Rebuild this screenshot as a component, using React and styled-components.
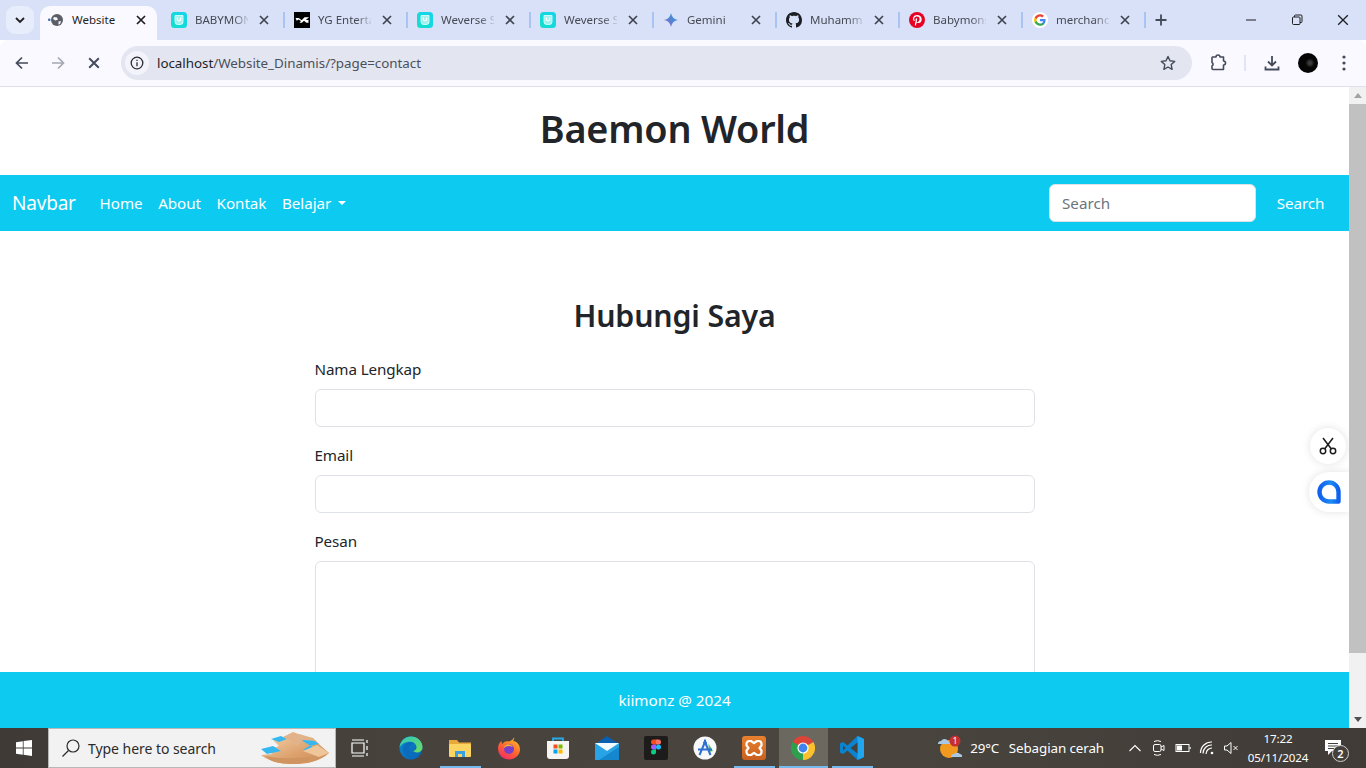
import React from 'react';
import styled, { createGlobalStyle } from 'styled-components';

const FONT = '"Noto Sans", "Open Sans", Arial, sans-serif';
const CYAN = '#0dcaf0';

const GlobalStyle = createGlobalStyle`
  html, body {
    margin: 0;
    padding: 0;
    overflow: hidden;
    background: #fff;
  }
  * { box-sizing: border-box; }
`;

const Screen = styled.div`
  width: 1366px;
  height: 768px;
  display: flex;
  flex-direction: column;
  overflow: hidden;
  font-family: ${FONT};
  color: #212529;
`;

/* browser tabs */
const TabStrip = styled.div`
  height: 40px;
  flex: none;
  display: flex;
  align-items: flex-start;
  padding: 6px 0 0 6px;
  background: #d8e1f8;
`;

const TabMenu = styled.div`
  width: 28px;
  height: 28px;
  margin-right: 6px;
  display: flex;
  align-items: center;
  justify-content: center;
  border-radius: 9px;
  background: #e7edfb;
`;

const Tab = styled.div`
  width: ${(p) => (p.$active ? '117px' : '120px')};
  height: 34px;
  margin-right: ${(p) => (p.$active ? '6px' : '0')};
  padding: 0 0 6px 8px;
  display: flex;
  align-items: center;
  border-radius: 10px 10px 0 0;
  background: ${(p) => (p.$active ? '#f9f9ff' : 'transparent')};
  color: ${(p) => (p.$active ? '#1f1f1f' : '#474a53')};
`;

const TabIcon = styled.span`
  width: 16px;
  height: 16px;
  flex: none;
  display: flex;
`;

const TabTitle = styled.span`
  width: 53px;
  margin-left: 8px;
  flex: none;
  white-space: nowrap;
  font-size: 11.5px;
  line-height: 16px;
  ${(p) => !p.$active && `
    -webkit-mask-image: linear-gradient(90deg, #000 72%, rgba(0, 0, 0, 0.15) 100%);
    mask-image: linear-gradient(90deg, #000 72%, rgba(0, 0, 0, 0.15) 100%);
  `}
`;

const TabClose = styled.span`
  width: 16px;
  height: 16px;
  margin-left: 8px;
  flex: none;
  display: flex;
  align-items: center;
  justify-content: center;
`;

const TabDivider = styled.span`
  width: 2px;
  height: 16px;
  margin: 6px 1px 0 0;
  flex: none;
  background: #a9c4f2;
`;

const NewTab = styled.span`
  width: 16px;
  height: 16px;
  margin: 6px 0 0 6px;
  display: flex;
`;

const WindowControls = styled.div`
  margin: -6px 0 0 auto;
  display: flex;
`;

const WindowButton = styled.span`
  width: 46px;
  height: 40px;
  display: flex;
  align-items: center;
  justify-content: center;
`;

/* address bar */
const Toolbar = styled.div`
  height: 47px;
  flex: none;
  display: flex;
  align-items: center;
  padding: 0 4px 1px;
  background: #f9f9ff;
  border-bottom: 1px solid #dfe0ee;
  border-radius: 8px 8px 0 0;
`;

const ToolButton = styled.span`
  width: 36px;
  height: 36px;
  flex: none;
  display: flex;
  align-items: center;
  justify-content: center;
`;

const Omnibox = styled.div`
  flex: 1;
  height: 34px;
  margin: 0 8px 0 9px;
  padding: 0 6px 0 4px;
  display: flex;
  align-items: center;
  border-radius: 17px;
  background: #e3e6f1;
`;

const InfoChip = styled.span`
  width: 24px;
  height: 24px;
  margin-right: 8px;
  display: flex;
  align-items: center;
  justify-content: center;
  border-radius: 50%;
  background: #f3f4fb;
`;

const Url = styled.span`
  flex: 1;
  font-size: 13.4px;
  letter-spacing: -0.04px;
  color: #4b5059;
  b {
    font-weight: 400;
    color: #1f1f1f;
  }
`;

const ToolDivider = styled.span`
  width: 2px;
  height: 16px;
  margin: 0 8px;
  background: #dde5f8;
`;

const Avatar = styled.span`
  width: 20px;
  height: 20px;
  border-radius: 50%;
  background: radial-gradient(circle at 60% 50%, #3d3d3d 0 8%, #050505 30%);
`;

/* page inside the browser */
const Viewport = styled.div`
  flex: 1;
  min-height: 0;
  display: flex;
`;

const Page = styled.div`
  position: relative;
  flex: 1;
  overflow: hidden;
  background: #fff;
`;

const SiteTitle = styled.h1`
  margin: 0;
  padding: 18px 0 22px;
  text-align: center;
  font-size: 37.8px;
  line-height: 48px;
  font-weight: 600;
  letter-spacing: -0.2px;
`;

const Navbar = styled.nav`
  height: 56px;
  padding: 0 12px;
  display: flex;
  align-items: center;
  background: ${CYAN};
  color: #fff;
`;

const Brand = styled.a`
  margin-right: 16px;
  font-size: 19px;
  letter-spacing: -0.2px;
`;

const NavLink = styled.a`
  padding: 8px 7.8px;
  font-size: 15.2px;
  line-height: 24px;
  letter-spacing: -0.05px;
  display: flex;
  align-items: center;
`;

const Caret = styled.span`
  margin-left: 7px;
  border-top: 4.8px solid #fff;
  border-left: 4.8px solid transparent;
  border-right: 4.8px solid transparent;
`;

const SearchForm = styled.form`
  margin-left: auto;
  display: flex;
  gap: 8px;
`;

const SearchInput = styled.input`
  width: 207px;
  height: 38px;
  padding: 6px 12px;
  border: 1px solid #dee2e6;
  border-radius: 6px;
  font-family: ${FONT};
  font-size: 15.2px;
  color: #212529;
  &::placeholder {
    color: #6c757d;
    opacity: 1;
  }
`;

const SearchButton = styled.button`
  width: 73px;
  height: 38px;
  padding: 0;
  border: 0;
  background: transparent;
  color: #fff;
  font-family: ${FONT};
  font-size: 15.2px;
  letter-spacing: -0.12px;
`;

const Main = styled.main`
  width: 720px;
  margin: 0 auto;
  padding-top: 66px;
`;

const ContactTitle = styled.h2`
  margin: 0 0 22px;
  text-align: center;
  font-size: 30.3px;
  line-height: 38px;
  font-weight: 600;
  letter-spacing: -0.15px;
`;

const Field = styled.div`
  margin-bottom: 16px;
`;

const Label = styled.label`
  display: block;
  margin-bottom: 8px;
  font-size: 15.2px;
  line-height: 24px;
  letter-spacing: -0.1px;
`;

const TextField = styled.input`
  display: block;
  width: 100%;
  height: 38px;
  border: 1px solid #dee2e6;
  border-radius: 6px;
  background: #fff;
`;

const MessageField = styled.textarea`
  display: block;
  width: 100%;
  height: 200px;
  border: 1px solid #dee2e6;
  border-radius: 6px;
  background: #fff;
  resize: none;
`;

const Footer = styled.footer`
  position: absolute;
  left: 0;
  right: 0;
  bottom: 0;
  height: 56px;
  display: flex;
  align-items: center;
  justify-content: center;
  background: ${CYAN};
  color: #fff;
  font-size: 15.2px;
  letter-spacing: 0;
`;

const FloatButton = styled.div`
  position: absolute;
  top: ${(p) => p.$top}px;
  right: ${(p) => (p.$docked ? 0 : 3)}px;
  width: ${(p) => (p.$docked ? 40 : 36)}px;
  height: ${(p) => (p.$docked ? 40 : 36)}px;
  display: flex;
  align-items: center;
  justify-content: center;
  border-radius: ${(p) => (p.$docked ? '20px 0 0 20px' : '50%')};
  background: #fff;
  box-shadow: 0 0 8px rgba(0, 0, 0, 0.12);
`;

const Scrollbar = styled.div`
  width: 17px;
  flex: none;
  display: flex;
  flex-direction: column;
  background: #f1f1f1;
`;

const ScrollArrow = styled.span`
  height: 17px;
  flex: none;
  display: flex;
  align-items: center;
  justify-content: center;
  margin-top: ${(p) => (p.$down ? 'auto' : '0')};
`;

const ScrollThumb = styled.div`
  height: 549px;
  background: #c1c1c1;
`;

/* windows taskbar */
const Taskbar = styled.div`
  height: 40px;
  flex: none;
  display: flex;
  align-items: stretch;
  background: linear-gradient(90deg, #3f3a36 0%, #47433c 30%, #4a463f 60%, #403b37 100%);
  color: #fff;
`;

const StartButton = styled.span`
  width: 48px;
  display: flex;
  align-items: center;
  justify-content: center;
`;

const SearchBox = styled.div`
  width: 288px;
  margin-right: 1.5px;
  padding: 0 4px 0 12px;
  display: flex;
  align-items: center;
  background: #f2f2f2;
  border: 1px solid #b7b7b7;
  color: #2b2b2b;
  font-size: 14px;
  letter-spacing: -0.05px;
`;

const SearchHint = styled.span`
  margin-left: 7px;
  flex: 1;
`;

const TaskSlot = styled.span`
  position: relative;
  width: 49px;
  display: flex;
  align-items: center;
  justify-content: center;
  background: ${(p) => (p.$active ? '#6b6860' : 'transparent')};
  &::after {
    content: '';
    display: ${(p) => (p.$open ? 'block' : 'none')};
    position: absolute;
    bottom: 0;
    left: ${(p) => (p.$active ? 0 : '4px')};
    right: ${(p) => (p.$active ? 0 : '4px')};
    height: 2px;
    background: #76b9ed;
  }
`;

const Tray = styled.div`
  margin-left: auto;
  padding-right: 13px;
  display: flex;
  align-items: center;
`;

const Weather = styled.div`
  margin-right: 19px;
  display: flex;
  align-items: center;
  font-size: 13.4px;
  letter-spacing: -0.1px;
  span + span {
    margin-left: 9.5px;
  }
  svg {
    margin-right: 7px;
  }
`;

const TrayIcon = styled.span`
  width: 24px;
  display: flex;
  justify-content: center;
`;

const Clock = styled.div`
  width: 70px;
  text-align: center;
  font-size: 11.6px;
  line-height: 19px;
  letter-spacing: -0.1px;
`;

const Notification = styled.span`
  position: relative;
  width: 40px;
  display: flex;
  justify-content: center;
`;

const NotificationCount = styled.span`
  position: absolute;
  top: 5px;
  left: 19px;
  width: 17px;
  height: 17px;
  display: flex;
  align-items: center;
  justify-content: center;
  border-radius: 50%;
  border: 1.5px solid #cfcfcf;
  background: #45403b;
  font-size: 11px;
  font-weight: 600;
`;

/* icons */
const Line = ({ size = 16, color = '#444a5a', width = 1.8, view = 16, children, ...rest }) => (
  <svg width={size} height={size} viewBox={`0 0 ${view} ${view}`} fill="none" stroke={color} strokeWidth={width} {...rest}>
    {children}
  </svg>
);

const CloseIcon = ({ size = 10, color = '#3f4450', width = 1.7 }) => (
  <Line size={size} view={10} color={color} width={width}><path d="M1 1l8 8M9 1l-8 8" /></Line>
);

const WeverseIcon = () => (
  <svg width="16" height="16" viewBox="0 0 16 16">
    <defs>
      <linearGradient id="wv" x1="0" y1="1" x2="1" y2="0">
        <stop offset="0" stopColor="#13e0c8" />
        <stop offset="1" stopColor="#14d3f0" />
      </linearGradient>
    </defs>
    <rect width="16" height="16" rx="3.5" fill="url(#wv)" />
    <path d="M4 3.500h8V10a2.500 2.500 0 0 1-2.500 2.500h-3A2.500 2.500 0 0 1 4 10z" fill="#9ff2ee" stroke="#eafffd" strokeWidth="0.8" />
    <path d="M6.300 5.600v1.400a1.700 1.700 0 0 0 3.400 0V5.600" fill="none" stroke="#fff" strokeWidth="1.200" />
  </svg>
);

const YgIcon = () => (
  <svg width="16" height="16" viewBox="0 0 16 16">
    <rect width="16" height="16" fill="#000" />
    <path d="M1.500 6h3.200l3 2.200L10.500 5.200H15L11.800 8h2.700v2.800h-2.200L10 8.800 7.800 10.800H5.500L7 9 4.500 7.500 2.800 8.800z" fill="#fff" />
  </svg>
);

const GeminiIcon = () => (
  <svg width="16" height="16" viewBox="0 0 16 16">
    <defs>
      <linearGradient id="gm" x1="0" y1="1" x2="1" y2="0">
        <stop offset="0" stopColor="#9168c0" />
        <stop offset="0.5" stopColor="#5684d1" />
        <stop offset="1" stopColor="#1ba1e3" />
      </linearGradient>
    </defs>
    <path d="M8 1c.6 3.800 3 6.300 7 7-4 .7-6.400 3.200-7 7-.6-3.800-3-6.300-7-7 4-.7 6.400-3.200 7-7z" fill="url(#gm)" />
  </svg>
);

const GithubIcon = () => (
  <svg width="16" height="16" viewBox="0 0 16 16" fill="#1b1f23">
    <path d="M8 0C3.58 0 0 3.58 0 8c0 3.54 2.29 6.53 5.47 7.59.4.07.55-.17.55-.38 0-.19-.01-.82-.01-1.49-2.01.37-2.53-.49-2.69-.94-.09-.23-.48-.94-.82-1.13-.28-.15-.68-.52-.01-.53.63-.01 1.08.58 1.23.82.72 1.21 1.87.87 2.33.66.07-.52.28-.87.51-1.07-1.78-.2-3.64-.89-3.64-3.95 0-.87.31-1.59.82-2.15-.08-.2-.36-1.02.08-2.12 0 0 .67-.21 2.2.82.64-.18 1.32-.27 2-.27s1.36.09 2 .27c1.53-1.04 2.2-.82 2.2-.82.44 1.1.16 1.92.08 2.12.51.56.82 1.27.82 2.15 0 3.07-1.87 3.75-3.65 3.95.29.25.54.73.54 1.48 0 1.07-.01 1.93-.01 2.2 0 .21.15.46.55.38A8.01 8.01 0 0 0 16 8c0-4.42-3.58-8-8-8z" />
  </svg>
);

const PinterestIcon = () => (
  <svg width="16" height="16" viewBox="0 0 16 16">
    <circle cx="8" cy="8" r="8" fill="#e60023" />
    <path d="M8.200 3C5.600 3 4 4.700 4 6.700c0 1 .5 2.100 1.300 2.400.3.100.3-.1.4-.5 0-.2 0-.3-.1-.5-.9-1.200-.2-3.500 2.300-3.500 2 0 2.900 1.300 2.600 3-.3 1.600-1 2.400-1.900 2.400-.6 0-1-.5-.9-1 .2-.7.5-1.400.5-1.900 0-1.100-1.600-1-1.600.6 0 .5.2.9.2.9L6 11.300c-.1.600-.1 1.500 0 2.700 0 .1.100.1.200 0 .6-.8 1.100-1.800 1.300-2.500l.3-1.200c.3.500 1 .8 1.700.8 2 0 3.200-1.900 3.200-3.900C12.700 4.700 10.800 3 8.200 3z" fill="#fff" />
  </svg>
);

const GoogleIcon = () => (
  <svg width="16" height="16" viewBox="0 0 16 16">
    <circle cx="8" cy="8" r="8" fill="#fff" />
    <path d="M13.600 8.100c0-.4 0-.8-.1-1.200H8v2.300h3.200c-.1.700-.6 1.400-1.200 1.800v1.500h1.900c1.100-1 1.700-2.500 1.700-4.400z" fill="#4285f4" />
    <path d="M8 13.800c1.600 0 2.900-.5 3.900-1.400L10 10.900c-.5.400-1.200.6-2 .6-1.500 0-2.800-1-3.300-2.400h-2v1.500c1 2 3 3.200 5.300 3.200z" fill="#34a853" />
    <path d="M4.700 9.100c-.2-.7-.2-1.500 0-2.200V5.400h-2c-.8 1.600-.8 3.600 0 5.200z" fill="#fbbc05" />
    <path d="M8 4.500c.9 0 1.600.3 2.200.9l1.700-1.700C10.800 2.700 9.500 2.200 8 2.200c-2.300 0-4.300 1.300-5.300 3.200l2 1.500C5.200 5.500 6.500 4.500 8 4.500z" fill="#ea4335" />
  </svg>
);

const LoadingGlobe = () => (
  <svg width="16" height="16" viewBox="0 0 16 16">
    <rect x="0" y="6.500" width="2.500" height="2.500" rx="1" fill="#3f6fb5" />
    <circle cx="9" cy="8" r="6" fill="#5b5e66" />
    <path d="M6 5l3 .5 1 2-2.500 1L5 7zM10.500 9.500l2.500-.5-1 3-1.500.5z" fill="#f9f9ff" />
  </svg>
);

const EdgeIcon = () => (
  <svg width="24" height="24" viewBox="0 0 24 24">
    <defs>
      <linearGradient id="edgeA" x1="0" y1="0" x2="1" y2="1">
        <stop offset="0" stopColor="#0c8fd0" />
        <stop offset="1" stopColor="#0a5cb0" />
      </linearGradient>
      <linearGradient id="edgeB" x1="0" y1="0" x2="1" y2="1">
        <stop offset="0" stopColor="#2dc7c0" />
        <stop offset="1" stopColor="#6fdc5a" />
      </linearGradient>
    </defs>
    <circle cx="12" cy="12" r="11.500" fill="url(#edgeA)" />
    <path d="M12 .5C18.400.5 23.500 5.400 23.500 11.200c0 3.200-2.600 5.300-5.500 5.300-1.700 0-3.200-.6-3.800-1.400 2-.5 3.300-1.700 3.300-3.600 0-3-2.800-5.700-6.500-5.700C6.500 5.800 2.500 8 .6 11.300 1.200 5.200 6 .5 12 .5z" fill="url(#edgeB)" />
    <path d="M11 6.200c-4 0-7 2.500-7 6.800 0 4.200 3.800 8 8.500 8 3.500 0 6.800-1.700 8.600-4.800-4 2.200-9.500 1.500-10.700-2.700-.5-1.800.5-3.800 1.800-4.700 1.500-1 3.500-1.200 3.500-1.200-1-.9-3-1.400-4.700-1.400z" fill="#0b6bbd" />
  </svg>
);

const FolderIcon = () => (
  <svg width="24" height="24" viewBox="0 0 24 24">
    <path d="M1 4h8l2 2.500h12V20H1z" fill="#e8a93a" />
    <rect x="1" y="8" width="22" height="13" rx="1" fill="#fcd462" />
    <path d="M7 21v-6h10v6h-3v-3h-4v3z" fill="#3aa0e0" />
  </svg>
);

const FirefoxIcon = () => (
  <svg width="24" height="24" viewBox="0 0 24 24">
    <defs>
      <linearGradient id="ff" x1="0.8" y1="0" x2="0.2" y2="1">
        <stop offset="0" stopColor="#ffbd2e" />
        <stop offset="0.5" stopColor="#ff6a2b" />
        <stop offset="1" stopColor="#f0276b" />
      </linearGradient>
    </defs>
    <path d="M17 1c.5 2-.2 3-1 4 3 0 7 3 7 8.500C23 19 18 23.500 12 23.500S1 19 1 12.500C1 9 2.500 6.500 4.500 5c0 1.500.5 2.500 1 3C7 5 10 5 12 5.500 15 4 17 3 17 1z" fill="url(#ff)" />
    <circle cx="12" cy="13" r="5" fill="#7a3fc9" />
    <path d="M7 12c2-2 5-3 9-1-1-2-4-3.500-6-2.500S7 10 7 12z" fill="#ffb02e" />
  </svg>
);

const StoreIcon = () => (
  <svg width="24" height="24" viewBox="0 0 24 24">
    <path d="M7 5V2.500h10V5" fill="none" stroke="#29a9e6" strokeWidth="1.800" />
    <path d="M1 5h22v15a3 3 0 0 1-3 3H4a3 3 0 0 1-3-3z" fill="#f7f5f2" />
    <rect x="7.500" y="8.500" width="4" height="4" fill="#f25022" />
    <rect x="12.500" y="8.500" width="4" height="4" fill="#7fba00" />
    <rect x="7.500" y="13.500" width="4" height="4" fill="#00a4ef" />
    <rect x="12.500" y="13.500" width="4" height="4" fill="#ffb900" />
  </svg>
);

const MailIcon = () => (
  <svg width="24" height="24" viewBox="0 0 24 24">
    <path d="M0 8 12 0l12 8v2H0z" fill="#0a5fae" />
    <rect y="7" width="24" height="17" fill="#27a3e6" />
    <path d="M0 7h24L12 15z" fill="#f2fafe" />
    <path d="M24 24H4l20-13z" fill="#1487cf" />
  </svg>
);

const FigmaIcon = () => (
  <svg width="24" height="24" viewBox="0 0 24 24">
    <rect width="24" height="24" rx="2" fill="#1d1c1b" />
    <path d="M7 6a2.500 2.500 0 0 1 2.500-2.500H12v5H9.500A2.500 2.500 0 0 1 7 6z" fill="#f24e1e" />
    <path d="M12 3.500h2.500a2.500 2.500 0 0 1 0 5H12z" fill="#ff7262" />
    <path d="M7 11a2.500 2.500 0 0 1 2.500-2.500H12v5H9.500A2.500 2.500 0 0 1 7 11z" fill="#a259ff" />
    <circle cx="14.500" cy="11" r="2.500" fill="#1abcfe" />
    <path d="M7 16a2.500 2.500 0 0 1 2.500-2.500H12V16a2.500 2.500 0 0 1-5 0z" fill="#0acf83" />
  </svg>
);

const StudioIcon = () => (
  <svg width="24" height="24" viewBox="0 0 24 24">
    <circle cx="12" cy="12" r="11.500" fill="#f6f8fa" />
    <path d="M15.500 7.500 20 15l-4 1z" fill="#4fbf6b" />
    <path d="M12 3.500v3M12 6 6.500 19M12 6l5.500 13M5 13.500h14" fill="none" stroke="#2f6fd0" strokeWidth="2" />
    <circle cx="12" cy="7" r="2" fill="#2f6fd0" />
  </svg>
);

const XamppIcon = () => (
  <svg width="24" height="24" viewBox="0 0 24 24">
    <defs>
      <linearGradient id="xp" x1="0" y1="0" x2="0" y2="1">
        <stop offset="0" stopColor="#e8802f" />
        <stop offset="1" stopColor="#c9601f" />
      </linearGradient>
    </defs>
    <rect width="24" height="24" rx="3" fill="url(#xp)" />
    <path d="M4.500 8a3 3 0 0 1 3-3H9l3 2.200L15 5h1.500a3 3 0 0 1 3 3v1.500L17.500 12l2 2.500V16a3 3 0 0 1-3 3H15l-3-2.200L9 19H7.500a3 3 0 0 1-3-3v-1.500l2-2.500-2-2.500z" fill="none" stroke="#fff" strokeWidth="2.200" strokeLinejoin="round" />
  </svg>
);

const ChromeIcon = () => (
  <svg width="24" height="24" viewBox="0 0 24 24">
    <path d="M12 12 1.600 6A12 12 0 0 1 22.400 6z" fill="#db4437" />
    <path d="M12 12 22.400 6A12 12 0 0 1 12 24z" fill="#fbc02d" />
    <path d="M12 12V24A12 12 0 0 1 1.600 6z" fill="#2e9f4d" />
    <circle cx="12" cy="12" r="5.600" fill="#fff" />
    <circle cx="12" cy="12" r="4.400" fill="#3f83ee" />
  </svg>
);

const VscodeIcon = () => (
  <svg width="24" height="24" viewBox="0 0 24 24">
    <path d="M17.500 0 24 3v18l-6.500 3-10-9.500L3 18l-3-1.500v-9L3 6l4.500 3.500z" fill="#0a84d0" />
    <path d="M17.500 0 24 3v18l-6.500 3z" fill="#21a5ef" />
    <path d="M17.500 6.500 10.500 12l7 5.500z" fill="#46413b" />
    <path d="M3 9.300 5.600 12 3 14.700z" fill="#46413b" />
  </svg>
);

const DunesArt = () => (
  <svg width="72" height="34" viewBox="0 0 72 34">
    <defs>
      <linearGradient id="sand" x1="0" y1="0" x2="1" y2="1">
        <stop offset="0" stopColor="#f4d4ac" />
        <stop offset="0.6" stopColor="#dca06c" />
        <stop offset="1" stopColor="#c98a58" />
      </linearGradient>
    </defs>
    <path d="M2 24c8 7 22 9 34 9s26-3 34-11l-8-7-8-8-14-4-12 2-14 4 6 6-14 5 8 3z" fill="url(#sand)" />
    <path d="M12 8l10-3 6 3-8 3zM40 8l14 1 6 4-10 2-6 4 16 2-8-6zM2 18l12-3 8 5-14 3z" fill="#35b8f0" />
    <path d="M24 6 34 1l14 5 10 4-14-1-6 6-6-5z" fill="#e2b38a" />
    <path d="M44 20l14-6 12 8-10 4z" fill="#efc69a" />
    <path d="M6 25c14 3 34 3 50 0-6 5-14 8-24 8-12 0-22-3-26-8z" fill="#cf945f" />
  </svg>
);

const WeatherIcon = () => (
  <svg width="26" height="26" viewBox="0 0 26 26">
    <circle cx="12" cy="14" r="9" fill="#f29a1f" />
    <path d="M1 9a3 3 0 0 1 3-3 4 4 0 0 1 7 0 3 3 0 0 1 2 3z" fill="#a9c8e6" />
    <path d="M14 22a3 3 0 0 1 3-3 4 4 0 0 1 6 0 2.500 2.500 0 0 1 2 3z" fill="#a9c8e6" />
    <circle cx="18" cy="6" r="5.500" fill="#c62f2f" />
    <text x="18" y="9" textAnchor="middle" fontSize="8" fontFamily={FONT} fill="#fff">1</text>
  </svg>
);

const tabs = [
  { title: 'BABYMON', icon: <WeverseIcon /> },
  { title: 'YG Enterta', icon: <YgIcon /> },
  { title: 'Weverse S', icon: <WeverseIcon /> },
  { title: 'Weverse S', icon: <WeverseIcon /> },
  { title: 'Gemini', icon: <GeminiIcon /> },
  { title: 'Muhamm', icon: <GithubIcon /> },
  { title: 'Babymons', icon: <PinterestIcon /> },
  { title: 'merchand', icon: <GoogleIcon /> },
];

function BrowserTabs() {
  return (
    <TabStrip>
      <TabMenu>
        <Line size={10} view={10} color="#1f1f1f" width={1.8}><path d="M1 3l4 4 4-4" /></Line>
      </TabMenu>
      <Tab $active>
        <TabIcon><LoadingGlobe /></TabIcon>
        <TabTitle $active>Website</TabTitle>
        <TabClose><CloseIcon color="#1f1f1f" /></TabClose>
      </Tab>
      {tabs.map((tab, i) => (
        <React.Fragment key={i}>
          <Tab>
            <TabIcon>{tab.icon}</TabIcon>
            <TabTitle>{tab.title}</TabTitle>
            <TabClose><CloseIcon /></TabClose>
          </Tab>
          <TabDivider />
        </React.Fragment>
      ))}
      <NewTab>
        <Line size={16} view={16} width={1.8}><path d="M8 2.500v11M2.500 8h11" /></Line>
      </NewTab>
      <WindowControls>
        <WindowButton>
          <Line size={12} view={12} color="#1f1f1f" width={1}><path d="M1 6h10" /></Line>
        </WindowButton>
        <WindowButton>
          <Line size={12} view={12} color="#1f1f1f" width={1}>
            <rect x="1.500" y="3" width="7.500" height="7.500" rx="1" />
            <path d="M3.500 3V2a1 1 0 0 1 1-1H10a1 1 0 0 1 1 1v5.500a1 1 0 0 1-1 1H9" />
          </Line>
        </WindowButton>
        <WindowButton>
          <CloseIcon size={12} color="#1f1f1f" width={1.100} />
        </WindowButton>
      </WindowControls>
    </TabStrip>
  );
}

function AddressBar() {
  return (
    <Toolbar>
      <ToolButton>
        <Line size={16} width={1.700} color="#444a5a"><path d="M14 8H2.500M8 2.500 2.500 8 8 13.500" /></Line>
      </ToolButton>
      <ToolButton>
        <Line size={16} width={1.700} color="#a5a8b2"><path d="M2 8h11.500M8 2.500 13.500 8 8 13.500" /></Line>
      </ToolButton>
      <ToolButton>
        <CloseIcon size={12} color="#444a5a" width={1.600} />
      </ToolButton>
      <Omnibox>
        <InfoChip>
          <Line size={14} view={14} color="#2b2d33" width={1.300}>
            <circle cx="7" cy="7" r="5.800" />
            <path d="M7 6.200v4M7 3.800v1.300" />
          </Line>
        </InfoChip>
        <Url><b>localhost</b>/Website_Dinamis/?page=contact</Url>
        <ToolButton>
          <Line size={16} width={1.400} color="#444a5a">
            <path d="M8 1.500l2 4.300 4.700.6-3.500 3.200.9 4.700L8 12l-4.100 2.300.9-4.700L1.300 6.400 6 5.800z" strokeLinejoin="round" />
          </Line>
        </ToolButton>
      </Omnibox>
      <ToolButton>
        <Line size={18} view={18} width={1.600} color="#444a5a">
          <path d="M3.500 3H7a2 2 0 0 1 4 0h3.500v4a2 2 0 0 1 0 4v4.500H4a1 1 0 0 1-1-1V12a2 2 0 0 0 0-3.500V3.500z" strokeLinejoin="round" />
        </Line>
      </ToolButton>
      <ToolDivider />
      <ToolButton>
        <Line size={18} view={18} width={1.800} color="#444a5a">
          <path d="M9 2v9M5 7.500 9 11.500l4-4M2.500 12.500v3h13v-3" />
        </Line>
      </ToolButton>
      <ToolButton><Avatar /></ToolButton>
      <ToolButton>
        <svg width="4" height="16" viewBox="0 0 4 16" fill="#444a5a">
          <circle cx="2" cy="2" r="1.600" />
          <circle cx="2" cy="8" r="1.600" />
          <circle cx="2" cy="14" r="1.600" />
        </svg>
      </ToolButton>
    </Toolbar>
  );
}

function Website() {
  return (
    <Page>
      <SiteTitle>Baemon World</SiteTitle>
      <Navbar>
        <Brand>Navbar</Brand>
        <NavLink>Home</NavLink>
        <NavLink>About</NavLink>
        <NavLink>Kontak</NavLink>
        <NavLink>Belajar<Caret /></NavLink>
        <SearchForm>
          <SearchInput placeholder="Search" />
          <SearchButton type="button">Search</SearchButton>
        </SearchForm>
      </Navbar>
      <Main>
        <ContactTitle>Hubungi Saya</ContactTitle>
        <Field>
          <Label>Nama Lengkap</Label>
          <TextField />
        </Field>
        <Field>
          <Label>Email</Label>
          <TextField />
        </Field>
        <Field>
          <Label>Pesan</Label>
          <MessageField />
        </Field>
      </Main>
      <Footer>kiimonz @ 2024</Footer>
      <FloatButton $top={341}>
        <Line size={20} view={20} color="#1c1c1c" width={1.500}>
          <circle cx="5" cy="15" r="2.700" />
          <circle cx="15" cy="15" r="2.700" />
          <path d="M6.800 12.800 15 2M13.200 12.800 5 2" />
        </Line>
      </FloatButton>
      <FloatButton $top={385} $docked>
        <svg width="24" height="24" viewBox="0 0 24 24">
          <defs>
            <linearGradient id="chat" x1="0" y1="0" x2="1" y2="0">
              <stop offset="0" stopColor="#1160f0" />
              <stop offset="0.6" stopColor="#1b8cf2" />
              <stop offset="1" stopColor="#1060ee" />
            </linearGradient>
          </defs>
          <path d="M12 2.500a9.500 9.500 0 1 0 0 19h9.500V12A9.500 9.500 0 0 0 12 2.500z" fill="none" stroke="url(#chat)" strokeWidth="4.400" strokeLinejoin="round" />
        </svg>
      </FloatButton>
    </Page>
  );
}

function Windows() {
  return (
    <Taskbar>
      <StartButton>
        <svg width="16" height="16" viewBox="0 0 16 16" fill="#fff">
          <path d="M0 2.200 6.800 1.200v6.400H0zM7.600 1.100 16 0v7.600H7.600zM0 8.400h6.800v6.400L0 13.800zM7.600 8.400H16V16l-8.400-1.200z" />
        </svg>
      </StartButton>
      <SearchBox>
        <Line size={20} view={20} color="#2b2b2b" width={1.200}>
          <circle cx="12" cy="8" r="6" />
          <path d="M7.500 12.500 1.500 18.500" />
        </Line>
        <SearchHint>Type here to search</SearchHint>
        <DunesArt />
      </SearchBox>
      <TaskSlot>
        <Line size={18} view={18} color="#fff" width={1.200} style={{ marginRight: 5 }}>
          <path d="M1 1h12M1 17h12M1 4h12v10H1zM16 1v3M16 7v4M16 14v3" />
        </Line>
      </TaskSlot>
      <TaskSlot><EdgeIcon /></TaskSlot>
      <TaskSlot $open><FolderIcon /></TaskSlot>
      <TaskSlot><FirefoxIcon /></TaskSlot>
      <TaskSlot><StoreIcon /></TaskSlot>
      <TaskSlot><MailIcon /></TaskSlot>
      <TaskSlot><FigmaIcon /></TaskSlot>
      <TaskSlot><StudioIcon /></TaskSlot>
      <TaskSlot $open><XamppIcon /></TaskSlot>
      <TaskSlot $open $active><ChromeIcon /></TaskSlot>
      <TaskSlot $open><VscodeIcon /></TaskSlot>
      <Tray>
        <Weather>
          <WeatherIcon />
          <span>29°C</span>
          <span>Sebagian cerah</span>
        </Weather>
        <TrayIcon>
          <Line size={14} view={14} color="#fff" width={1.100}><path d="M1.500 10 7 4.500l5.500 5.500" /></Line>
        </TrayIcon>
        <TrayIcon>
          <Line size={18} view={18} color="#fff" width={1}>
            <rect x="3.500" y="5.500" width="7.500" height="7" rx="1.500" />
            <path d="M11 8l3-1.500v5L11 10M4 2.500a8 8 0 0 1 7 0M4 15.500a8 8 0 0 0 7 0" />
          </Line>
        </TrayIcon>
        <TrayIcon>
          <Line size={16} view={16} color="#fff" width={1}>
            <rect x="1" y="4.500" width="13" height="7" />
            <rect x="2.500" y="6" width="4" height="4" fill="#fff" />
            <path d="M15.200 7v2" />
          </Line>
        </TrayIcon>
        <TrayIcon>
          <Line size={16} view={16} color="#fff" width={1.200}>
            <path d="M1.500 13A11 11 0 0 1 13 2M4 13.500A8.500 8.500 0 0 1 13 5M7 14a6 6 0 0 1 6-6" />
            <circle cx="13" cy="13" r="1.300" fill="#fff" stroke="none" />
          </Line>
        </TrayIcon>
        <TrayIcon>
          <Line size={16} view={16} color="#fff" width={1}>
            <path d="M1.500 6v4h2.500L8 13.500v-11L4 6zM10.500 6l4 4M14.500 6l-4 4" />
          </Line>
        </TrayIcon>
        <Clock>
          <div>17:22</div>
          <div>05/11/2024</div>
        </Clock>
        <Notification>
          <svg width="18" height="16" viewBox="0 0 18 16">
            <path d="M1 0h16v11H8l-4 4v-4H1z" fill="#fff" />
            <path d="M4 3.500h10M4 6h10M4 8.500h7" stroke="#45403b" strokeWidth="1" />
          </svg>
          <NotificationCount>2</NotificationCount>
        </Notification>
      </Tray>
    </Taskbar>
  );
}

export default function App() {
  return (
    <Screen>
      <GlobalStyle />
      <BrowserTabs />
      <AddressBar />
      <Viewport>
        <Website />
        <Scrollbar>
          <ScrollArrow>
            <svg width="8" height="5" viewBox="0 0 8 5" fill="#a3a3a3"><path d="M4 0l4 5H0z" /></svg>
          </ScrollArrow>
          <ScrollThumb />
          <ScrollArrow $down>
            <svg width="8" height="5" viewBox="0 0 8 5" fill="#505050"><path d="M0 0h8L4 5z" /></svg>
          </ScrollArrow>
        </Scrollbar>
      </Viewport>
      <Windows />
    </Screen>
  );
}
